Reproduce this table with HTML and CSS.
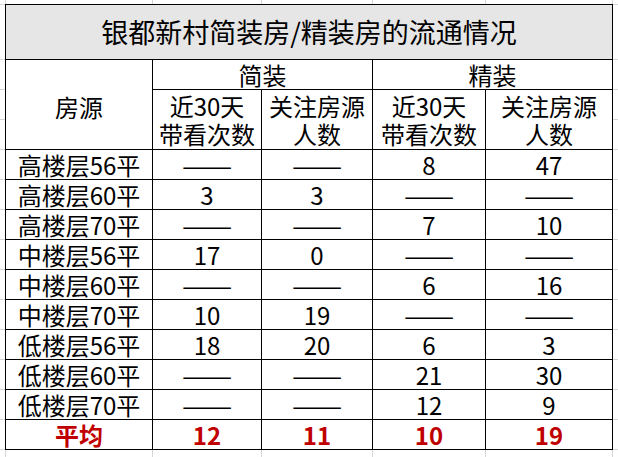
FILE: index.html
```html
<!DOCTYPE html>
<html lang="zh-CN">
<head>
<meta charset="utf-8">
<title>银都新村简装房/精装房的流通情况</title>
<link rel="stylesheet" href="styles.css">
</head>
<body>
<div class="sheet">
  <div class="grid">
    <div class="cell title">银都新村简装房/精装房的流通情况</div>
    <div class="cell source">房源</div>
    <div class="cell group g1">简装</div>
    <div class="cell group g2">精装</div>
    <div class="cell sub">近30天<br>带看次数</div>
    <div class="cell sub">关注房源<br>人数</div>
    <div class="cell sub">近30天<br>带看次数</div>
    <div class="cell sub">关注房源<br>人数</div>

    <div class="cell">高楼层56平</div><div class="cell"><span class="dash">——</span></div><div class="cell"><span class="dash">——</span></div><div class="cell">8</div><div class="cell">47</div>
    <div class="cell">高楼层60平</div><div class="cell">3</div><div class="cell">3</div><div class="cell"><span class="dash">——</span></div><div class="cell"><span class="dash">——</span></div>
    <div class="cell">高楼层70平</div><div class="cell"><span class="dash">——</span></div><div class="cell"><span class="dash">——</span></div><div class="cell">7</div><div class="cell">10</div>
    <div class="cell">中楼层56平</div><div class="cell">17</div><div class="cell">0</div><div class="cell"><span class="dash">——</span></div><div class="cell"><span class="dash">——</span></div>
    <div class="cell">中楼层60平</div><div class="cell"><span class="dash">——</span></div><div class="cell"><span class="dash">——</span></div><div class="cell">6</div><div class="cell">16</div>
    <div class="cell">中楼层70平</div><div class="cell">10</div><div class="cell">19</div><div class="cell"><span class="dash">——</span></div><div class="cell"><span class="dash">——</span></div>
    <div class="cell">低楼层56平</div><div class="cell">18</div><div class="cell">20</div><div class="cell">6</div><div class="cell">3</div>
    <div class="cell">低楼层60平</div><div class="cell"><span class="dash">——</span></div><div class="cell"><span class="dash">——</span></div><div class="cell">21</div><div class="cell">30</div>
    <div class="cell">低楼层70平</div><div class="cell"><span class="dash">——</span></div><div class="cell"><span class="dash">——</span></div><div class="cell">12</div><div class="cell">9</div>
    <div class="cell avg">平均</div><div class="cell avg">12</div><div class="cell avg">11</div><div class="cell avg">10</div><div class="cell avg">19</div>
  </div>
</div>
</body>
</html>
```
FILE: styles.css
```css
html, body {
  margin: 0;
  padding: 0;
  background: #fff;
}

.sheet {
  width: 618px;
  height: 457px;
  box-sizing: border-box;
  padding: 4px 0 0 5px;
  overflow: hidden;
  background-color: #fff;
  background-image:
    linear-gradient(to right, transparent 5px, #d6d6d6 5px, #d6d6d6 6px, transparent 6px),
    linear-gradient(to right, transparent 152px, #d6d6d6 152px, #d6d6d6 153px, transparent 153px),
    linear-gradient(to right, transparent 261px, #d6d6d6 261px, #d6d6d6 262px, transparent 262px),
    linear-gradient(to right, transparent 372px, #d6d6d6 372px, #d6d6d6 373px, transparent 373px),
    linear-gradient(to right, transparent 485px, #d6d6d6 485px, #d6d6d6 486px, transparent 486px),
    linear-gradient(to right, transparent 612px, #d6d6d6 612px, #d6d6d6 613px, transparent 613px),
    linear-gradient(to bottom, transparent 4px, #d6d6d6 4px, #d6d6d6 5px, transparent 5px),
    repeating-linear-gradient(to bottom, #d6d6d6 0, #d6d6d6 1px, transparent 1px, transparent 30px);
  background-repeat: no-repeat;
  background-size: 100% 100%, 100% 100%, 100% 100%, 100% 100%, 100% 100%, 100% 100%, 100% 100%, 100% 398px;
  background-position: 0 0, 0 0, 0 0, 0 0, 0 0, 0 0, 0 0, 0 59px;
  font-family: "Noto Sans CJK SC", "Noto Sans", sans-serif;
  color: #000;
}

.grid {
  display: grid;
  width: 608px;
  box-sizing: border-box;
  grid-template-columns: 146px 108px 110px 112px 126px;
  grid-template-rows: 54px 29px 59px repeat(10, 29px);
  gap: 1px;
  padding: 1px;
  background: #000;
}

.cell {
  background: #fff;
  display: flex;
  align-items: center;
  justify-content: center;
  text-align: center;
  font-size: 24px;
  line-height: 29px;
  white-space: nowrap;
}

.title {
  grid-column: 1 / -1;
  background: #e7e6e6;
  font-size: 27px;
  line-height: 54px;
}

.source {
  grid-column: 1;
  grid-row: 2 / 4;
  padding-top: 4px;
}

.g1 {
  grid-column: 2 / 4;
}

.g2 {
  grid-column: 4 / 6;
}

.sub {
  line-height: 28px;
  align-items: flex-end;
  padding-bottom: 1px;
}

.dash {
  display: inline-block;
  transform: scaleX(1.25);
}

.avg {
  color: #c00000;
  font-weight: 700;
}
```
